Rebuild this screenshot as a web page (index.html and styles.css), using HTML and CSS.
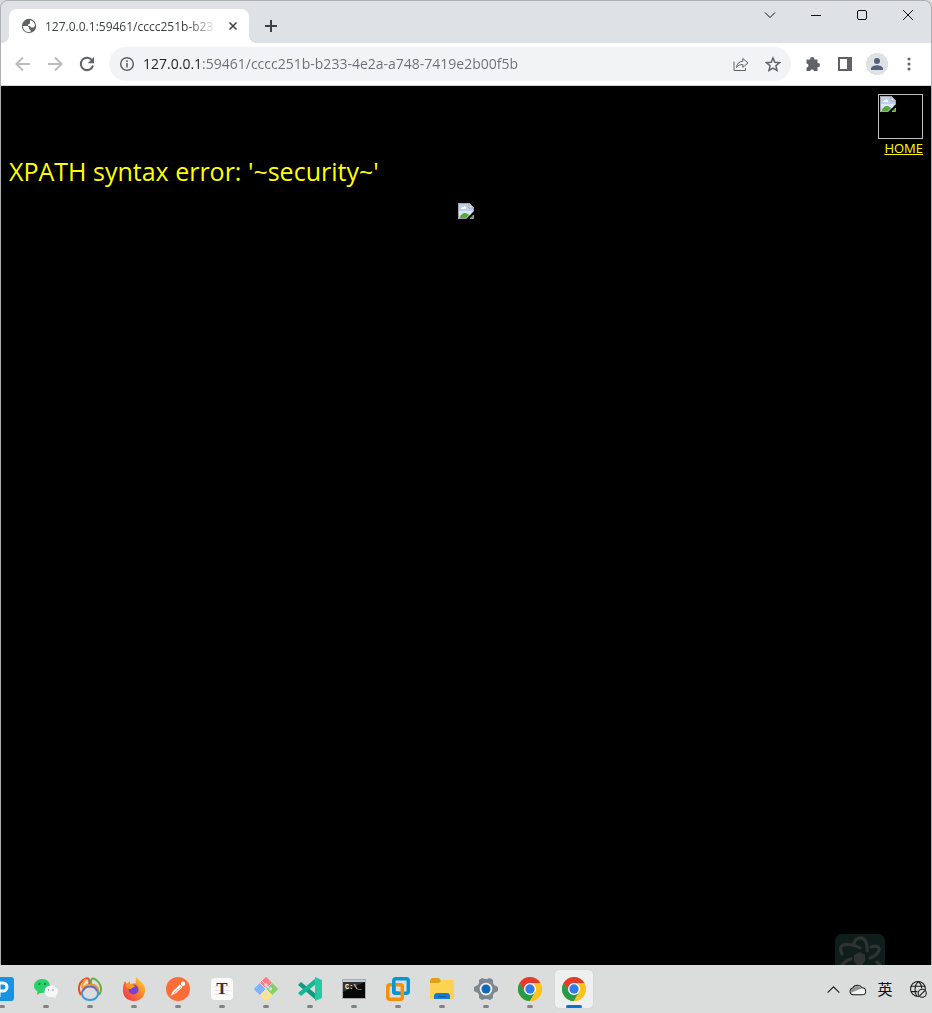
FILE: index.html
```html
<!DOCTYPE html>
<html lang="en">
<head>
<meta charset="utf-8">
<title>127.0.0.1:59461</title>
<link rel="stylesheet" href="styles.css">
</head>
<body>
<svg class="defs" aria-hidden="true">
  <symbol id="broken" viewBox="0 0 16 16">
    <path fill="#bdd0f4" d="M0 0h11l5 5v3L8 16H0z"/>
    <path fill="#dde7fb" d="M1 8h14l-3 4H1z"/>
    <path fill="#fff" d="M3 6V5h1V4h2V3h1v1h1v2z"/>
    <path fill="#53ad35" d="M2 15c0-3 3-5 5-5s3 1 4 2l-3 3z"/>
    <path fill="#53ad35" d="M12 15l3-3v3z"/>
    <path fill="#f5f5f5" d="M11 0v5h5z"/>
    <path fill="none" stroke="#a3a3a3" d="M8 15.500H.5V.5H11l4.500 4.500v3M11 .5V5h4.500M15.500 12v3.500H12"/>
  </symbol>
  <symbol id="chrome" viewBox="0 0 24 24">
    <circle cx="12" cy="12" r="12" fill="#fcc31e"/>
    <path fill="#e33b2e" d="M1.600 6a12 12 0 0 1 20.800 0H12L6.800 15z"/>
    <path fill="#259b4b" d="M1.600 6A12 12 0 0 0 12 24l5.200-9H6.800z"/>
    <path fill="#fcc31e" d="M12 24a12 12 0 0 0 10.400-18H12l5.200 9z"/>
    <circle cx="12" cy="12" r="6" fill="#fff"/><circle cx="12" cy="12" r="4.700" fill="#2f7de9"/>
  </symbol>
</svg>

<div class="window">
  <header class="tabstrip">
    <div class="tab">
      <svg class="favicon" viewBox="0 0 16 16"><circle cx="8" cy="8" r="7.200" fill="#5f6368"/><path fill="#fff" d="M2 8h4.500l1.500 1.500v1.500l1.500 1v2.200C4.500 14.500 2 11.500 2 8zM9 2.200c3 .4 5 2.800 5 5.800l-1.500 1.500H10L9 8H7V6.500l2-1V4z"/></svg>
      <span class="tab-title">127.0.0.1:59461/cccc251b-b23</span>
      <button class="tab-close" aria-label="Close tab"><svg viewBox="0 0 16 16"><path d="M4.500 4.500l7 7M11.500 4.500l-7 7"/></svg></button>
    </div>
    <button class="new-tab" aria-label="New tab"><svg viewBox="0 0 16 16"><path d="M8 2v12M2 8h12"/></svg></button>
    <div class="window-controls">
      <button aria-label="Search tabs"><svg viewBox="0 0 12 12"><path d="M1 3.500l5 5 5-5"/></svg></button>
      <button aria-label="Minimize"><svg viewBox="0 0 12 12"><path d="M1 6.500h10"/></svg></button>
      <button aria-label="Maximize"><svg viewBox="0 0 12 12"><rect x="1.500" y="1.500" width="9" height="9" rx="1.500"/></svg></button>
      <button aria-label="Close"><svg viewBox="0 0 12 12"><path d="M1 1l10 10M11 1L1 11"/></svg></button>
    </div>
  </header>

  <nav class="toolbar">
    <button class="tool faded" aria-label="Back"><svg viewBox="0 0 16 16"><path class="line" d="M15 8H2M8 1.500L1.500 8 8 14.500"/></svg></button>
    <button class="tool faded" aria-label="Forward"><svg viewBox="0 0 16 16"><path class="line" d="M1 8h13M8 1.500L14.500 8 8 14.500"/></svg></button>
    <button class="tool" aria-label="Reload"><svg viewBox="0 0 16 16"><path class="line" d="M13.200 4.500A6.200 6.200 0 1 0 14 9.500"/><path d="M15 1v6.200H8.800z"/></svg></button>
    <div class="omnibox">
      <button class="tool" aria-label="Site information"><svg viewBox="0 0 16 16"><circle class="thin" cx="8" cy="8" r="6.300"/><path d="M7.200 7h1.600v4.500H7.200zM7.200 4.300h1.600v1.600H7.200z"/></svg></button>
      <input class="address" type="text" aria-label="Address" value="127.0.0.1:59461/cccc251b-b233-4e2a-a748-7419e2b00f5b">
      <button class="tool" aria-label="Share"><svg viewBox="0 0 16 16"><path class="hair" d="M1 5.500v9h11.500V12M3.500 11.500C4 7.500 6 5.500 9.800 5.300V2.500L15 7l-5.200 4.300V8.500C7 8.500 5 9.500 3.500 11.500z"/></svg></button>
      <button class="tool" aria-label="Bookmark"><svg viewBox="0 0 16 16"><path class="thin" d="M8 2l1.800 4.300 4.700.4-3.600 3.100 1.100 4.600L8 12l-4 2.400 1.100-4.600-3.600-3.100 4.700-.4z"/></svg></button>
    </div>
    <button class="tool" aria-label="Extensions"><svg viewBox="0 0 16 16"><path d="M1.500 3.500h3.800a2 2 0 1 1 3.900 0h3.300v3.700a2 2 0 1 1 0 3.900V15H9a2 2 0 0 0-3.800 0H1.500v-3.600a2 2 0 0 0 0-4z"/></svg></button>
    <button class="tool" aria-label="Side panel"><svg viewBox="0 0 16 16"><path fill-rule="evenodd" d="M1 1h14v14H1zM3 3v10h7V3z"/></svg></button>
    <button class="tool profile" aria-label="Profile"><svg viewBox="0 0 16 16"><circle cx="8" cy="5" r="3"/><path d="M2 14v-1.500C2 10 6 9.200 8 9.200s6 .8 6 3.300V14z"/></svg></button>
    <button class="tool" aria-label="Menu"><svg viewBox="0 0 16 16"><circle cx="8" cy="3" r="1.500"/><circle cx="8" cy="8" r="1.500"/><circle cx="8" cy="13" r="1.500"/></svg></button>
  </nav>

  <main class="page">
    <div class="home">
      <div class="home-image"><svg class="broken"><use href="#broken"/></svg></div>
      <a href="#">HOME</a>
    </div>
    <p class="message">XPATH syntax error: '~security~'</p>
    <div class="picture"><svg class="broken"><use href="#broken"/></svg></div>
    <svg class="watermark" viewBox="0 0 50 31"><path fill="#0f1e1a" d="M0 31V7a7 7 0 0 1 7-7h36a7 7 0 0 1 7 7v24z"/><g fill="none" stroke="#303332" stroke-width="3.200" stroke-linecap="round"><path d="M19 9c2-6 9-7 12-1 1 3 1.500 6 1 9M25 14C19 10 8 9 6 13c-1 2 0 5 1 7M36 13c6-2 9 0 8 3-1 4-4 6-9 8M16 25c-4 1-7 3-9 6M42 28l3 3"/></g><path fill="#303332" d="M25 18l5 3v6l-3 4h-5l-3-4v-6z"/></svg>
  </main>
</div>

<footer class="taskbar">
  <div class="apps">
    <button class="app" aria-label="PixPin"><svg viewBox="0 0 24 24"><rect width="24" height="24" rx="3" fill="#1793e6"/><path fill="none" stroke="#fff" stroke-width="3" d="M9 20V6h4a4 4 0 0 1 0 8H9"/></svg></button>
    <button class="app" aria-label="WeChat"><svg viewBox="0 0 24 24"><path fill="#2bd06c" d="M8 2c5 0 8 3 8 7s-3 7-8 7H6l-3 2 .5-3.500C1 13 0 11 0 9c0-4 3.500-7 8-7z"/><path fill="#f6f6f6" d="M17 8.500c4 0 7 2.500 7 6 0 2-1 3.500-2.500 4.500l.3 2.300-2.800-1.200h-2c-4 0-6.500-2.500-6.500-5.600 0-3.500 3-6 6.500-6z"/><g fill="#157640"><circle cx="5.500" cy="7" r="1"/><circle cx="11" cy="7" r="1"/></g><g fill="#888"><circle cx="14.500" cy="13" r=".8"/><circle cx="19" cy="13" r=".8"/></g></svg></button>
    <button class="app" aria-label="Navicat"><svg viewBox="0 0 24 24"><g fill="none" stroke-width="2"><path stroke="#e5502c" d="M3 18C-1 12 1 4 8 1.500c3-1 4 2 3 6"/><path stroke="#f0a12b" d="M4.500 14C5 9 8 8 11 7.500M8 2C5 5 4 7 4 11"/><path stroke="#6cae3d" d="M13.500 8c-1.500-5 0-8 4-5.500 6 4 7 11 3.500 15.500"/><path stroke="#dc9b35" d="M12 8c5-1 8 2 8 6"/><path stroke="#3d9bd1" d="M5 13c-3 5 1 10 7 10s10-5 7-10"/><path stroke="#7468b2" d="M5 14c2-6 12-6 14 0"/></g></svg></button>
    <button class="app" aria-label="Firefox"><svg viewBox="0 0 24 24"><defs><linearGradient id="fx" x1="1" y1="0" x2="0" y2="1"><stop stop-color="#ffe32e"/><stop offset=".5" stop-color="#ff7a29"/><stop offset="1" stop-color="#ee2864"/></linearGradient></defs><path fill="url(#fx)" d="M15 0c1 4 7 5 8 11 1 7-4 13-11 13S0 19 1 11c0-3 1-5 2-7l2 3 3-3v3l6-1c-1-2 0-5 1-6z"/><circle cx="11.500" cy="12.500" r="5" fill="#7146d0"/><path fill="#ff9326" d="M4 8c3-3 8-1 9 2-3 0-3 2-5 2S4 10 4 8z"/></svg></button>
    <button class="app" aria-label="Postman"><svg viewBox="0 0 24 24"><circle cx="12" cy="12" r="12" fill="#ff6c37"/><path fill="#fff" d="M14 7.500l2.500 2.500L10 16l-5.500 3L7 14z"/><circle cx="17" cy="6.800" r="2.200" fill="#fff"/><path stroke="#ff6c37" stroke-width=".7" d="M8 16l7-6"/></svg></button>
    <button class="app" aria-label="Typora"><svg viewBox="0 0 24 24"><rect x="1" y="1" width="22" height="22" rx="4" fill="#fbfbfb"/><path stroke="#eaeaea" d="M4 9.500h16M4 13.500h16M4 17.500h16"/><text class="typora" x="12" y="17" text-anchor="middle">T</text></svg></button>
    <button class="app" aria-label="Git"><svg viewBox="0 0 24 24"><g transform="rotate(45 12 12)"><rect x="3.500" y="3.500" width="8.200" height="8.200" rx="1" fill="#ff7c80"/><rect x="12.300" y="3.500" width="8.200" height="8.200" rx="1" fill="#87d068"/><rect x="3.500" y="12.300" width="8.200" height="8.200" rx="1" fill="#80b3ff"/><rect x="12.300" y="12.300" width="8.200" height="8.200" rx="1" fill="#ffe680"/></g><path fill="#ff7c80" d="M12 0l6 6-6 6-6-6z"/><path fill="#87d068" d="M18 6l6 6-6 6-6-6z"/><path fill="#80b3ff" d="M6 6l6 6-6 6-6-6z"/><path fill="#ffe680" d="M12 12l6 6-6 6-6-6z"/><path fill="none" stroke="#dcdcdc" d="M6 6l12 12M18 6L6 18M8 4l4 4v9M12 8l4 4"/><g fill="#dcdcdc"><circle cx="12" cy="8" r="1.700"/><circle cx="16.500" cy="12" r="1.700"/><circle cx="12" cy="17" r="1.700"/></g></svg></button>
    <button class="app" aria-label="VS Code Insiders"><svg viewBox="0 0 24 24"><path fill="#0b9d7d" d="M0 8l3-3 15 12v6z"/><path fill="#13b896" d="M0 16l3 3L18 7V1z"/><path fill="#25c9a5" d="M17 0l7 3v18l-7 3z"/></svg></button>
    <button class="app" aria-label="Command Prompt"><svg viewBox="0 0 24 24"><rect x=".5" y="2.500" width="23" height="19" fill="#080808" stroke="#aaa"/><path fill="#c3ccd5" d="M1 3h22v2H1z"/><path fill="#333" d="M1 5h22L1 15z"/><text class="console" x="3" y="12">C:\_</text></svg></button>
    <button class="app" aria-label="VMware"><svg viewBox="0 0 24 24"><g fill="none" stroke-width="3.500"><rect x="7.800" y="1.800" width="14.500" height="14.500" rx="2" stroke="#0895d3"/><rect x="1.800" y="7.800" width="14.500" height="14.500" rx="2" stroke="#f78f08"/><path stroke="#0895d3" d="M7.800 6v8.300a2 2 0 0 0 2 2H13"/></g></svg></button>
    <button class="app" aria-label="File Explorer"><svg viewBox="0 0 24 24"><path fill="#dda01b" d="M0 3l2-2h7l2 3v5H0z"/><path fill="#ffd251" d="M0 6h9l3-3h12v19H0z"/><path fill="#147bd1" d="M4 22v-3a3 3 0 0 1 3-3h10a3 3 0 0 1 3 3v3z"/><path stroke="#0b58a2" d="M8 19.500h8"/></svg></button>
    <button class="app" aria-label="Settings"><svg viewBox="0 0 24 24"><path fill="#7d8790" d="M8 1l3 1h2l3-1 3 2v3l1 2 4 2v4l-4 2-1 2v3l-3 2-3-1h-2l-3 1-3-2v-3l-1-2-4-2v-4l4-2 1-2V3z"/><circle cx="12" cy="12" r="6.300" fill="#eef2f5"/><circle cx="12" cy="12" r="4.500" fill="#1168b5"/></svg></button>
    <button class="app" aria-label="Chrome"><svg><use href="#chrome"/></svg></button>
    <button class="app active" aria-label="Chrome, current window"><svg><use href="#chrome"/></svg></button>
  </div>
  <div class="tray">
    <button aria-label="Hidden icons"><svg viewBox="0 0 16 16"><path d="M2.500 11L8 5.500l5.500 5.500"/></svg></button>
    <button aria-label="OneDrive"><svg viewBox="0 0 16 16"><path fill="#f3f3f3" d="M4 13a3.200 3.200 0 0 1-.5-6.300 5 5 0 0 1 8.800-.3A3.300 3.300 0 0 1 12.500 13z"/><path fill="#929292" stroke="none" d="M4 7a4.600 4.600 0 0 1 8 0L8 8.500 2 11C.5 9 2 7 4 7z"/></svg></button>
    <button class="ime" lang="zh" aria-label="Input language">英</button>
    <button class="network" aria-label="Network"><svg viewBox="0 0 16 16"><circle cx="7.500" cy="7.500" r="7"/><path d="M1 5h13M1 10h6M7.500.5C4 4 4 11 6.500 14.500M7.500.5C10 2 11 4 11 7"/><circle cx="11.500" cy="11.500" r="3.800" fill="#dcdddd"/><path d="M9 14l5-5"/></svg></button>
  </div>
</footer>
</body>
</html>
```
FILE: styles.css
```css
* { box-sizing: border-box; }

body {
  margin: 0;
  min-height: 100vh;
  display: flex;
  flex-direction: column;
  background: #dbdcdc;
  font-family: "Open Sans", "Noto Sans CJK SC", sans-serif;
}

button {
  display: flex;
  align-items: center;
  justify-content: center;
  flex: none;
  margin: 0;
  padding: 0;
  border: 0;
  background: none;
  font: inherit;
}

.defs { position: absolute; width: 0; height: 0; }

.window {
  flex: 1;
  display: flex;
  flex-direction: column;
  border: 1px solid #adafb1;
  border-bottom: 0;
  border-radius: 8px 8px 0 0;
  overflow: hidden;
}

.tabstrip {
  display: flex;
  height: 42px;
  padding: 8px 0 0 8px;
  background: #dee1e6;
}

.tab {
  position: relative;
  display: flex;
  align-items: center;
  width: 240px;
  padding: 0 8px 0 12px;
  border-radius: 8px 8px 0 0;
  background: #fff;
}

.tab::before,
.tab::after {
  content: "";
  position: absolute;
  bottom: 0;
  width: 8px;
  height: 8px;
}
.tab::before { right: 100%; background: radial-gradient(circle at 0 0, #dee1e6 8px, #fff 8px); }
.tab::after { left: 100%; background: radial-gradient(circle at 100% 0, #dee1e6 8px, #fff 8px); }

.favicon { width: 16px; height: 16px; flex: none; }

.tab-title {
  flex: 1;
  margin: 0 8px;
  overflow: hidden;
  white-space: nowrap;
  font-size: 12px;
  color: #3c4043;
  mask-image: linear-gradient(to right, #000 calc(100% - 28px), transparent);
}

.tab-close svg { width: 16px; height: 16px; }
.tab-close path { stroke: #3c4043; stroke-width: 1.5; }
.new-tab path { stroke: #3c4043; stroke-width: 2; }

.new-tab { width: 28px; height: 34px; margin-left: 8px; }
.new-tab svg { width: 16px; height: 16px; }

.window-controls {
  display: flex;
  margin: -8px 0 0 auto;
}
.window-controls button { width: 46px; height: 28px; }
.window-controls svg {
  width: 12px;
  height: 12px;
  fill: none;
  stroke: #111;
}

.toolbar {
  display: flex;
  align-items: center;
  height: 43px;
  padding: 0 6px;
  border-bottom: 1px solid #d5d7da;
  background: #fff;
}

.tool { width: 32px; height: 32px; }
.tool svg { width: 16px; height: 16px; fill: #5f6368; }
.tool .line { fill: none; stroke: #5f6368; stroke-width: 2; }
.tool .thin { fill: none; stroke: #5f6368; stroke-width: 1.5; }
.tool .hair { fill: none; stroke: #5f6368; }
.faded .line { stroke: #babcbe; }

.omnibox {
  flex: 1;
  display: flex;
  align-items: center;
  min-width: 0;
  height: 34px;
  margin: 0 6px;
  padding: 0 2px;
  border-radius: 17px;
  background: #f1f3f4;
}

.address {
  flex: 1;
  min-width: 0;
  padding: 0 0 2px;
  border: 0;
  outline: 0;
  font: 14px "Open Sans", sans-serif;
  color: transparent;
  background: linear-gradient(to right, #202124 59px, #6b6f73 59px);
  background-clip: text;
}

.profile { background: radial-gradient(circle, #dee1e6 11px, transparent 11px); }
.profile svg { fill: #53627a; }

.page {
  position: relative;
  flex: 1;
  padding: 8px;
  background: #000;
  color: #ff0;
}

.home {
  display: flex;
  flex-direction: column;
  align-items: flex-end;
}
.home-image {
  width: 45px;
  height: 45px;
  padding: 1px;
  border: 1px solid #c0c0c0;
}
.home a { font-size: 13px; line-height: 18px; color: #ff0; }

.broken { display: block; width: 16px; height: 16px; }

.message { margin: 0; font-size: 25px; line-height: 28px; }
.picture { display: flex; justify-content: center; margin-top: 18px; }

.watermark {
  position: absolute;
  right: 46px;
  bottom: 0;
  width: 50px;
  height: 31px;
}

.taskbar {
  display: flex;
  justify-content: space-between;
  height: 48px;
  overflow: hidden;
  background: #dbdcdc;
}

.apps { display: flex; align-items: center; margin-left: -17px; gap: 6px; }
.app {
  position: relative;
  width: 38px;
  height: 38px;
  border-radius: 4px;
}
.app svg { width: 24px; height: 24px; }
.app::after {
  content: "";
  position: absolute;
  bottom: 0;
  width: 6px;
  height: 3px;
  border-radius: 2px;
  background: #838484;
}
.active { background: #eeefef; box-shadow: 0 0 1px #aaa; }
.active::after { width: 16px; background: #0b72cf; }

.typora { font: bold 17px "Liberation Serif", serif; fill: #333; }
.console { font: bold 7px "Liberation Mono", monospace; fill: #fff; }

.tray { display: flex; align-items: center; padding-right: 5px; }
.tray button { width: 24px; height: 32px; }
.tray svg { width: 17px; height: 17px; fill: none; stroke: #191919; }
.tray .ime { width: 32px; padding-bottom: 2px; font-size: 15px; color: #111; }
.tray .network { width: 18px; margin-left: 8px; }
```
